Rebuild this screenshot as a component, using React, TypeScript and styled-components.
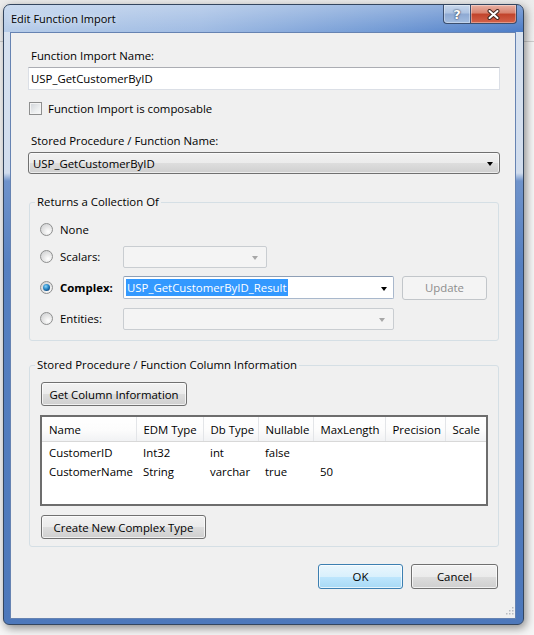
import React from 'react';
import styled, { createGlobalStyle, css } from 'styled-components';

const uiFont = `"Segoe UI", "Open Sans", "Noto Sans", sans-serif`;

const GlobalStyle = createGlobalStyle`
  html, body {
    margin: 0;
    padding: 0;
  }
  body {
    font-family: ${uiFont};
    font-size: 11.4px;
    color: #000;
  }
`;

/** Desktop behind the dialog */

const Desktop = styled.div`
  width: 534px;
  height: 635px;
  box-sizing: border-box;
  overflow: hidden;
  padding: 4px 0 0 3px;
  background: linear-gradient(to bottom, #ececec 0, #f3f3f3 41px, #cfcfcf 41px, #cfcfcf 42px, #f6f6f6 42px);
`;

/** Aero window frame */

const Window = styled.div`
  width: 521px;
  height: 621px;
  box-sizing: border-box;
  display: flex;
  flex-direction: column;
  padding: 0 7px 5px 6px;
  border: 1px solid #34465f;
  border-radius: 7px 7px 6px 6px;
  background:
    linear-gradient(to bottom, rgba(255, 255, 255, 0.3), rgba(255, 255, 255, 0) 27px) top / 100% 27px no-repeat,
    linear-gradient(to right, #b6cce9 0%, #9fbbe3 38%, #739bd5 72%, #4c7cc7 100%) top / 100% 27px no-repeat,
    linear-gradient(to bottom, #d9e3f0 0, #d0dced 168px, #6f93cb 176px, #5680c1 260px, #4d78bb 100%);
  box-shadow: 2px 3px 10px rgba(0, 0, 0, 0.45);
`;

const TitleBar = styled.div`
  height: 27px;
  flex: none;
  display: flex;
  align-items: flex-start;
  margin: 0 -7px 0 -6px;
  padding: 0 6px 0 7px;
`;

const Title = styled.div`
  font-size: 11px;
  line-height: 27px;
  color: #000;
  text-shadow: 0 0 6px rgba(255, 255, 255, 0.9);
`;

const CaptionGroup = styled.div`
  margin-left: auto;
  display: flex;
`;

const CaptionButton = styled.div<{ $kind: 'help' | 'close' }>`
  box-sizing: border-box;
  height: 19px;
  display: flex;
  align-items: center;
  justify-content: center;
  border: 1px solid #3b4e6e;
  border-top: none;
  box-shadow: inset 0 0 0 1px rgba(255, 255, 255, 0.35);
  ${({ $kind }) =>
    $kind === 'help'
      ? css`
          width: 27px;
          border-right: none;
          border-radius: 0 0 0 4px;
          background: linear-gradient(to bottom, #c9d8ec 0%, #adc3e2 45%, #8ea9d3 50%, #a3bde0 100%);
        `
      : css`
          width: 47px;
          border-radius: 0 0 4px 0;
          background: linear-gradient(to bottom, #e9b1a4 0%, #d8826e 45%, #c1432b 50%, #d4624a 100%);
        `}
`;

const HelpGlyph = styled.span`
  font-family: "DejaVu Sans", sans-serif;
  font-weight: bold;
  font-size: 13px;
  line-height: 13px;
  color: #fff;
  text-shadow: 0 0 1px #2d3b52, 0 0 2px #2d3b52;
`;

const CloseGlyph = () => (
  <svg width="13" height="11" viewBox="0 0 13 11">
    <path d="M2.5 2 L10.5 9 M10.5 2 L2.5 9" stroke="#40261f" strokeWidth="4" strokeLinecap="round" />
    <path d="M2.5 2 L10.5 9 M10.5 2 L2.5 9" stroke="#fff" strokeWidth="2" strokeLinecap="round" />
  </svg>
);

/** Client area */

const Client = styled.div`
  position: relative;
  flex: 1;
  display: flex;
  flex-direction: column;
  padding: 15px 15px 0 17px;
  background: #f0f0f0;
  border: 1px solid #6683b2;
`;

const FieldLabel = styled.div<{ $top?: number }>`
  line-height: 16px;
  padding-left: 3px;
  margin-top: ${({ $top }) => $top ?? 0}px;
`;

const TextBox = styled.div`
  box-sizing: border-box;
  height: 23px;
  margin-top: 3px;
  padding-left: 2px;
  display: flex;
  align-items: center;
  background: #fff;
  border: 1px solid #dbdfe6;
  border-top-color: #abadb3;
`;

const CheckRow = styled.label`
  display: flex;
  align-items: center;
  gap: 6px;
  height: 13px;
  margin: 12px 0 0 1px;
  line-height: 13px;
`;

const CheckBox = styled.span`
  box-sizing: border-box;
  width: 13px;
  height: 13px;
  border: 1px solid #8e8f8f;
  background: linear-gradient(135deg, #cfd3d8 0%, #eceeef 60%, #fafafa 100%);
  box-shadow: inset 0 0 0 1px #f4f4f4;
`;

/** Combo boxes */

type ComboKind = 'list' | 'edit' | 'disabled';

const ComboBox = styled.div<{ $kind: ComboKind; $width?: number; $height?: number; $top?: number }>`
  box-sizing: border-box;
  position: relative;
  display: flex;
  align-items: center;
  height: ${({ $height }) => $height ?? 22}px;
  margin-top: ${({ $top }) => $top ?? 0}px;
  ${({ $width }) => ($width ? `width: ${$width}px;` : '')}
  padding: 0 20px 0 4px;
  border-radius: 3px;
  ${({ $kind }) =>
    $kind === 'list'
      ? css`
          border: 1px solid #707070;
          background: linear-gradient(to bottom, #f2f2f2 0%, #ebebeb 50%, #dddddd 51%, #cfcfcf 100%);
          box-shadow: inset 0 0 0 1px rgba(255, 255, 255, 0.6);
        `
      : $kind === 'edit'
      ? css`
          padding-left: 2px;
          border-radius: 2px;
          border: 1px solid #a9b8cc;
          border-top-color: #8e9fb6;
          background: #fff;
        `
      : css`
          border-radius: 2px;
          border: 1px solid #c9cdd1;
          background: #f4f4f4;
        `}
`;

const DropArrow = styled.span<{ $muted?: boolean }>`
  position: absolute;
  right: ${({ $muted }) => ($muted ? 8 : 6)}px;
  top: 50%;
  margin-top: -1px;
  width: 0;
  height: 0;
  border-left: 3.5px solid transparent;
  border-right: 3.5px solid transparent;
  border-top: 4px solid ${({ $muted }) => ($muted ? '#a7a7a7' : '#000')};
`;

const Selection = styled.span`
  line-height: 17px;
  padding: 0 1px;
  background: #3399ff;
  color: #fff;
`;

/** Buttons */

type ButtonKind = 'normal' | 'default' | 'disabled';

const PushButton = styled.button<{ $kind?: ButtonKind; $width: number; $height?: number }>`
  box-sizing: border-box;
  width: ${({ $width }) => $width}px;
  height: ${({ $height }) => $height ?? 24}px;
  padding: 0;
  font: inherit;
  color: #000;
  border-radius: 3px;
  ${({ $kind = 'normal' }) =>
    $kind === 'default'
      ? css`
          border: 1px solid #3c7fb1;
          background: linear-gradient(to bottom, #eaf6fd 0%, #d9f0fc 50%, #bee6fd 51%, #a7d9f5 100%);
          box-shadow: inset 0 0 0 1px rgba(255, 255, 255, 0.7);
        `
      : $kind === 'disabled'
      ? css`
          border: 1px solid #c2c6ca;
          background: #f4f4f4;
          color: #8d8d8d;
        `
      : css`
          border: 1px solid #707070;
          background: linear-gradient(to bottom, #f2f2f2 0%, #ebebeb 50%, #dddddd 51%, #cfcfcf 100%);
          box-shadow: inset 0 0 0 1px rgba(255, 255, 255, 0.7);
        `}
`;

/** Group boxes */

const GroupBox = styled.fieldset<{ $top: number }>`
  min-width: 0;
  margin: ${({ $top }) => $top}px 1px 0 1px;
  padding: 0 10px 0 10px;
  border: 1px solid #d5dfe5;
  border-radius: 3px;
`;

const GroupLegend = styled.legend`
  margin-left: -5px;
  padding: 0 2px;
  line-height: 16px;
`;

const ReturnsBody = styled.div`
  padding: 8px 0 10px;
`;

const OptionRow = styled.div<{ $top?: number }>`
  display: flex;
  align-items: center;
  height: 23px;
  margin-top: ${({ $top }) => $top ?? 0}px;
`;

const OptionLabel = styled.label<{ $bold?: boolean }>`
  width: 83px;
  flex: none;
  display: flex;
  align-items: center;
  gap: 7px;
  font-weight: ${({ $bold }) => ($bold ? 'bold' : 'normal')};
`;

const Radio = styled.span<{ $checked?: boolean }>`
  position: relative;
  box-sizing: border-box;
  width: 13px;
  height: 13px;
  border-radius: 50%;
  border: 1px solid #8e8f8f;
  background: radial-gradient(circle at 65% 70%, #ffffff 0%, #e6e6e6 45%, #c9cbce 100%);
  ${({ $checked }) =>
    $checked &&
    css`
      &::after {
        content: '';
        position: absolute;
        left: 2px;
        top: 2px;
        width: 7px;
        height: 7px;
        border-radius: 50%;
        background: radial-gradient(circle at 40% 35%, #8fd4f7 0%, #2e8ecc 40%, #0f4b83 75%, #1b3656 100%);
      }
    `}
`;

const ColumnBody = styled.div`
  padding: 9px 0 7px;
  display: flex;
  flex-direction: column;
  align-items: flex-start;
`;

/** Column list */

const ListFrame = styled.div`
  box-sizing: border-box;
  width: 448px;
  height: 91px;
  margin-top: 9px;
  border: 2px solid #6d6d6d;
  background: #fff;
`;

const ColumnTable = styled.table`
  width: 100%;
  border-collapse: collapse;
  table-layout: fixed;
`;

const HeadCell = styled.th`
  height: 24px;
  padding: 0 0 0 7px;
  font-weight: normal;
  text-align: left;
  white-space: nowrap;
  overflow: hidden;
  border-right: 1px solid #e3e5e8;
  border-bottom: 1px solid #d8d8d8;
  background: linear-gradient(to bottom, #ffffff 0%, #fcfcfc 55%, #f1f2f4 100%);
  &:last-child {
    border-right: none;
  }
`;

const BodyCell = styled.td`
  height: 19px;
  padding: 0 0 0 7px;
  white-space: nowrap;
  overflow: hidden;
`;

const SpacerCell = styled.td`
  height: 1px;
  padding: 0;
`;

const Footer = styled.div`
  display: flex;
  justify-content: flex-end;
  gap: 8px;
  margin: 17px 2px 0 0;
`;

const SizeGrip = styled.svg`
  position: absolute;
  right: 1px;
  bottom: 3px;
`;

const columns = [
  { title: 'Name', width: 94 },
  { title: 'EDM Type', width: 67 },
  { title: 'Db Type', width: 55 },
  { title: 'Nullable', width: 55 },
  { title: 'MaxLength', width: 72 },
  { title: 'Precision', width: 60 },
  { title: 'Scale', width: 41 },
];

const resultColumns = [
  ['CustomerID', 'Int32', 'int', 'false', '', '', ''],
  ['CustomerName', 'String', 'varchar', 'true', '50', '', ''],
];

const gripDots = [
  [6, 0],
  [3, 3],
  [6, 3],
  [0, 6],
  [3, 6],
  [6, 6],
];

export default function App() {
  return (
    <>
      <GlobalStyle />
      <Desktop>
        <Window>
          <TitleBar>
            <Title>Edit Function Import</Title>
            <CaptionGroup>
              <CaptionButton $kind="help">
                <HelpGlyph>?</HelpGlyph>
              </CaptionButton>
              <CaptionButton $kind="close">
                <CloseGlyph />
              </CaptionButton>
            </CaptionGroup>
          </TitleBar>

          <Client>
            <FieldLabel>Function Import Name:</FieldLabel>
            <TextBox>USP_GetCustomerByID</TextBox>
            <CheckRow>
              <CheckBox />
              Function Import is composable
            </CheckRow>

            <FieldLabel $top={18}>Stored Procedure / Function Name:</FieldLabel>
            <ComboBox $kind="list" $top={3}>
              USP_GetCustomerByID
              <DropArrow />
            </ComboBox>

            <GroupBox $top={20}>
              <GroupLegend>Returns a Collection Of</GroupLegend>
              <ReturnsBody>
                <OptionRow>
                  <OptionLabel>
                    <Radio />
                    None
                  </OptionLabel>
                </OptionRow>
                <OptionRow $top={4}>
                  <OptionLabel>
                    <Radio />
                    Scalars:
                  </OptionLabel>
                  <ComboBox $kind="disabled" $width={144}>
                    <DropArrow $muted />
                  </ComboBox>
                </OptionRow>
                <OptionRow $top={8}>
                  <OptionLabel $bold>
                    <Radio $checked />
                    Complex:
                  </OptionLabel>
                  <ComboBox $kind="edit" $width={271} $height={23}>
                    <Selection>USP_GetCustomerByID_Result</Selection>
                    <DropArrow />
                  </ComboBox>
                  <PushButton $kind="disabled" $width={85} style={{ marginLeft: 8 }}>
                    Update
                  </PushButton>
                </OptionRow>
                <OptionRow $top={8}>
                  <OptionLabel>
                    <Radio />
                    Entities:
                  </OptionLabel>
                  <ComboBox $kind="disabled" $width={271}>
                    <DropArrow $muted />
                  </ComboBox>
                </OptionRow>
              </ReturnsBody>
            </GroupBox>

            <GroupBox $top={16}>
              <GroupLegend>Stored Procedure / Function Column Information</GroupLegend>
              <ColumnBody>
                <PushButton $width={146} style={{ marginLeft: 1 }}>
                  Get Column Information
                </PushButton>
                <ListFrame>
                  <ColumnTable>
                    <colgroup>
                      {columns.map((c) => (
                        <col key={c.title} style={{ width: c.width }} />
                      ))}
                    </colgroup>
                    <thead>
                      <tr>
                        {columns.map((c) => (
                          <HeadCell key={c.title}>{c.title}</HeadCell>
                        ))}
                      </tr>
                    </thead>
                    <tbody>
                      <tr>
                        <SpacerCell colSpan={columns.length} />
                      </tr>
                      {resultColumns.map((row) => (
                        <tr key={row[0]}>
                          {row.map((value, i) => (
                            <BodyCell key={i}>{value}</BodyCell>
                          ))}
                        </tr>
                      ))}
                    </tbody>
                  </ColumnTable>
                </ListFrame>
                <PushButton $width={165} style={{ marginLeft: 1, marginTop: 9 }}>
                  Create New Complex Type
                </PushButton>
              </ColumnBody>
            </GroupBox>

            <Footer>
              <PushButton $kind="default" $width={85} $height={25}>
                OK
              </PushButton>
              <PushButton $width={87} $height={25}>
                Cancel
              </PushButton>
            </Footer>

            <SizeGrip width="8" height="8" viewBox="0 0 8 8">
              {gripDots.map(([x, y]) => (
                <rect key={`${x}-${y}`} x={x} y={y} width="1.5" height="1.5" fill="#b8bcc2" />
              ))}
            </SizeGrip>
          </Client>
        </Window>
      </Desktop>
    </>
  );
}
